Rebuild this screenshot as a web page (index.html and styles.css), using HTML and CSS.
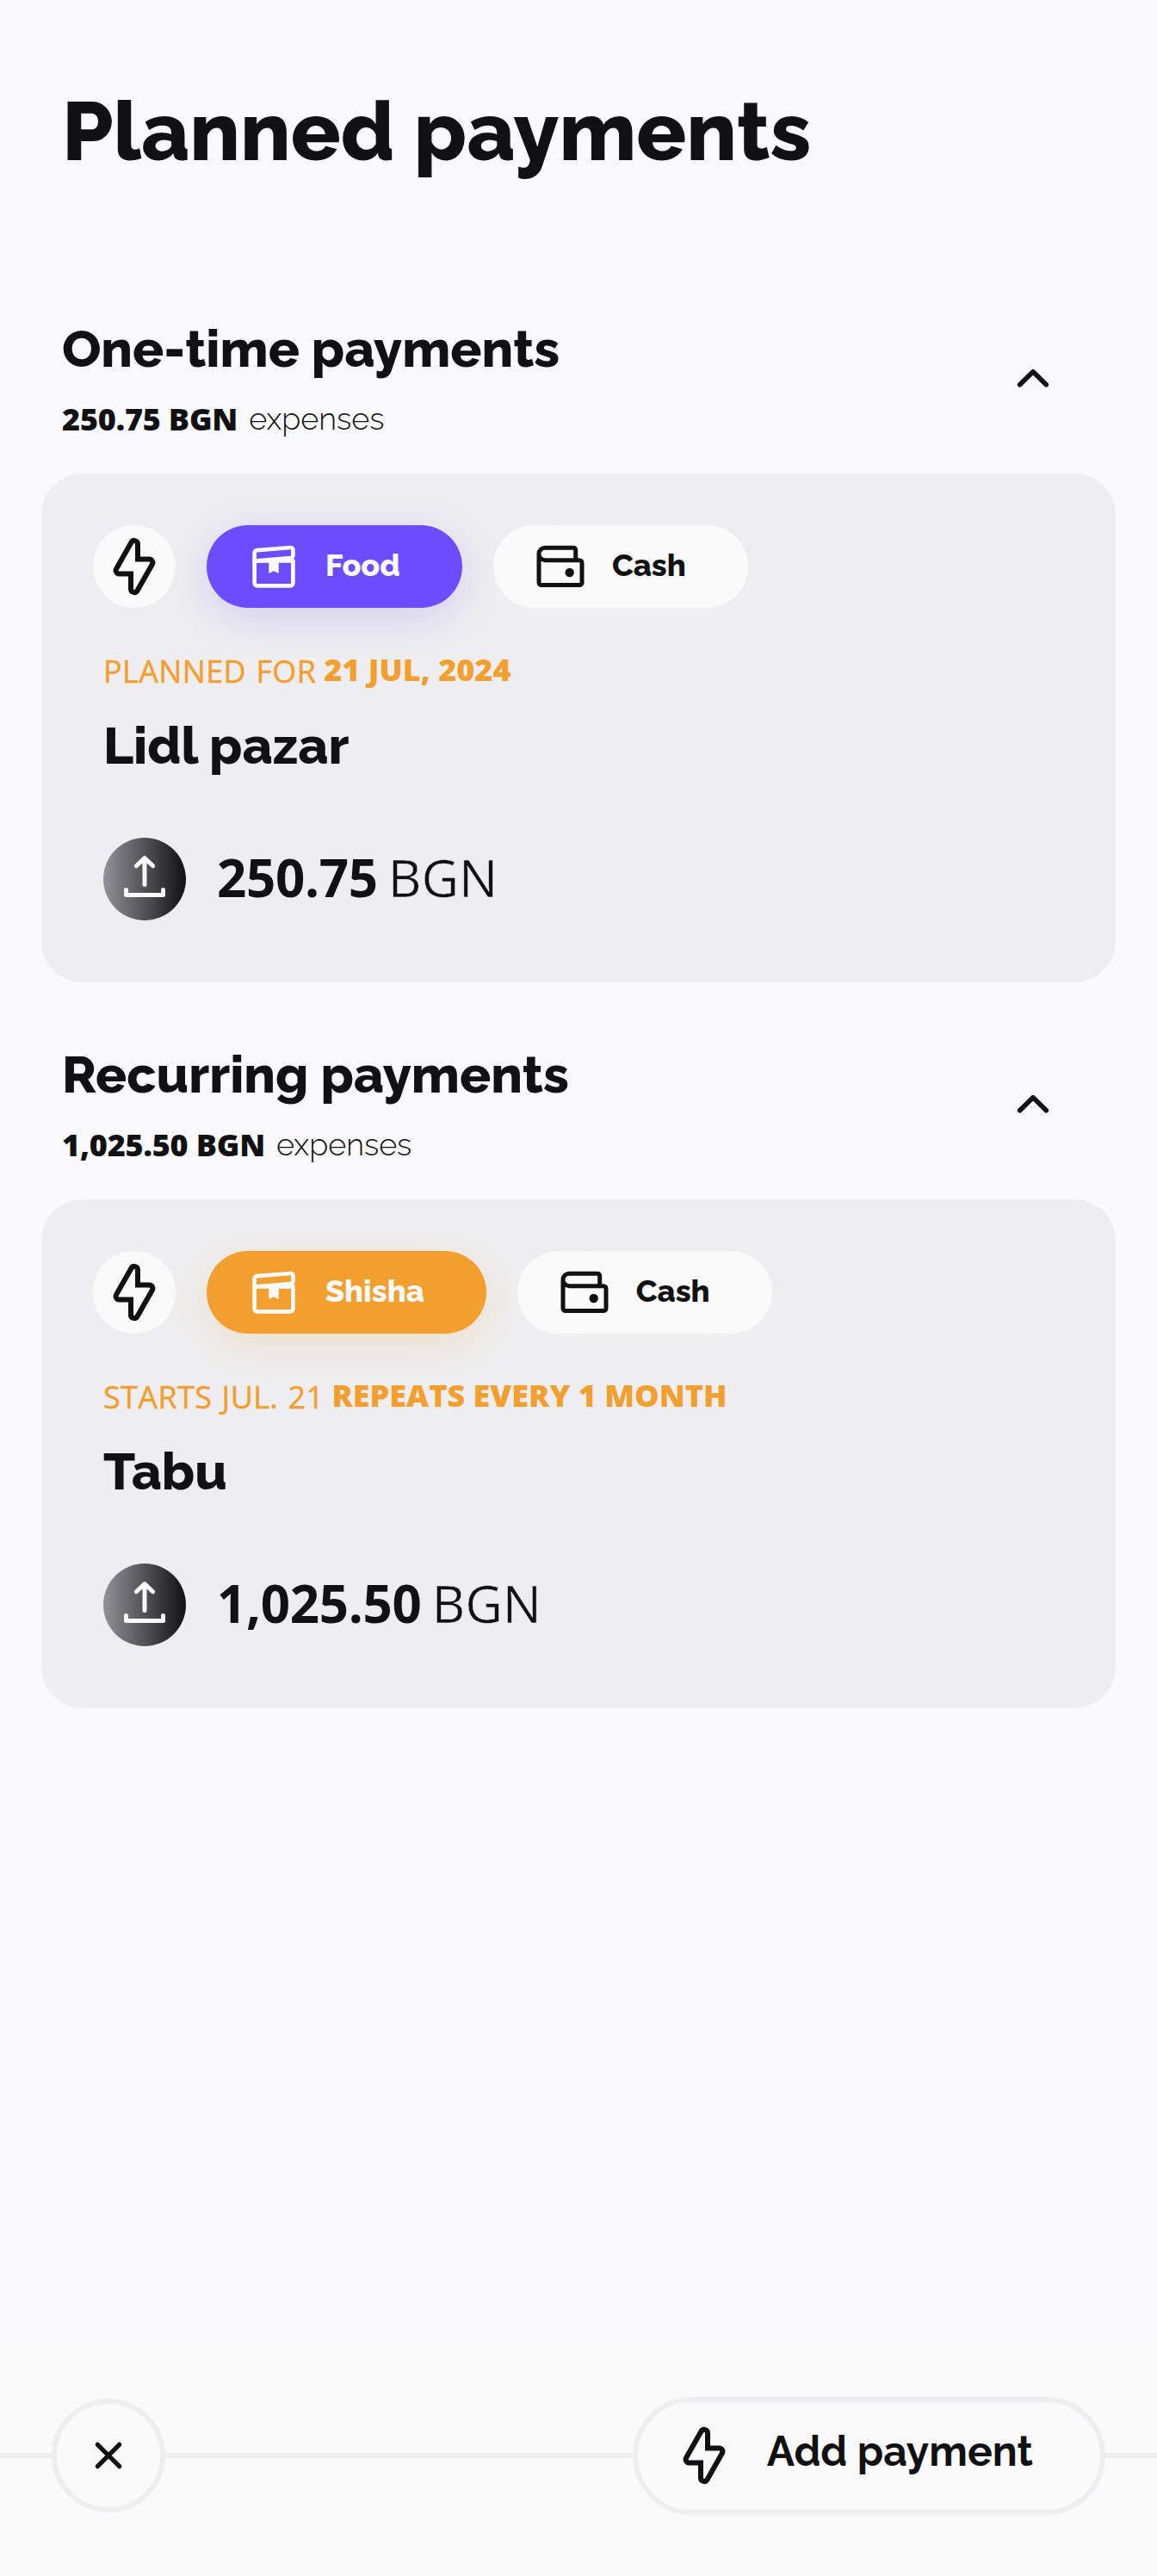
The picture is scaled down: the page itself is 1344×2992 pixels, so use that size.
FILE: index.html
```
<!DOCTYPE html>
<html lang="en">
<head>
<meta charset="utf-8">
<title>Planned payments</title>
<link rel="stylesheet" href="styles.css">
</head>
<body>
<svg class="sprite" aria-hidden="true">
  <symbol id="bolt" viewBox="0 0 96 96">
    <path d="M52 39.4V22a4 4 0 0 0-7.5-2L27.2 50.5a4 4 0 0 0 3.5 6.1H44V74a4 4 0 0 0 7.5 2L68.8 45.5a4 4 0 0 0-3.5-6.1Z" fill="none" stroke="currentColor" stroke-width="6"/>
  </symbol>
  <symbol id="box" viewBox="0 0 96 96">
    <g transform="translate(2 0)">
      <g fill="none" stroke="currentColor" stroke-width="4.7" stroke-linejoin="round">
        <path d="M3.6 41.3H48.4V67.3a3 3 0 0 1-3 3H6.6a3 3 0 0 1-3-3Z"/>
        <path d="M3.6 41.5V32.2a3 3 0 0 1 2.8-3L45.2 26a3 3 0 0 1 3.2 3V35a3 3 0 0 1-2.8 3Z"/>
      </g>
      <path d="M20.3 41H31.7V56L26 53.3L20.3 56Z" fill="currentColor"/>
    </g>
  </symbol>
  <symbol id="wallet" viewBox="0 0 96 96">
    <path d="M45.7 40.7V28.7a2.5 2.5 0 0 0-2.5-2.5H10.2a7.2 7.2 0 0 0 0 14.5H50a3 3 0 0 1 3 3V66.5a3 3 0 0 1-3 3H6a3 3 0 0 1-3-3V33.4" fill="none" stroke="currentColor" stroke-width="5"/>
    <circle cx="38.7" cy="55" r="5.2" fill="currentColor"/>
  </symbol>
  <symbol id="upload" viewBox="0 0 96 96">
    <path d="M48 54.5V24M38.4 32.7L48 23.6L57.6 32.7M26.5 60.5V66.5H69.5V60.5" fill="none" stroke="currentColor" stroke-width="5" stroke-linecap="round" stroke-linejoin="round"/>
  </symbol>
  <symbol id="chevron" viewBox="0 0 72 72">
    <path d="M20.7 43.7L36 28.7L51.3 43.7" fill="none" stroke="currentColor" stroke-width="5.6" stroke-linecap="round" stroke-linejoin="round"/>
  </symbol>
  <symbol id="cross" viewBox="0 0 72 72">
    <path d="M23.3 23.3L48.7 48.7M48.7 23.3L23.3 48.7" fill="none" stroke="currentColor" stroke-width="5.2" stroke-linecap="round"/>
  </symbol>
</svg>

<main class="content">
  <h1 class="title">Planned payments</h1>

  <section class="group">
    <header class="group-head">
      <div>
        <h2 class="group-title">One-time payments</h2>
        <p class="summary"><b class="summary-amount">250.75 BGN</b><span class="summary-label">expenses</span></p>
      </div>
      <svg class="chevron"><use href="#chevron"/></svg>
    </header>
    <article class="card">
      <div class="chips">
        <span class="type"><svg class="icon"><use href="#bolt"/></svg></span>
        <span class="chip chip-food"><svg class="icon"><use href="#box"/></svg>Food</span>
        <span class="chip chip-account"><svg class="icon"><use href="#wallet"/></svg>Cash</span>
      </div>
      <p class="due"><span class="due-when">PLANNED FOR</span><b class="due-rule">21 JUL, 2024</b></p>
      <h3 class="name">Lidl pazar</h3>
      <div class="amount">
        <span class="badge"><svg class="icon"><use href="#upload"/></svg></span>
        <b class="value">250.75</b><span class="currency">BGN</span>
      </div>
    </article>
  </section>

  <section class="group">
    <header class="group-head">
      <div>
        <h2 class="group-title">Recurring payments</h2>
        <p class="summary"><b class="summary-amount">1,025.50 BGN</b><span class="summary-label">expenses</span></p>
      </div>
      <svg class="chevron"><use href="#chevron"/></svg>
    </header>
    <article class="card">
      <div class="chips">
        <span class="type"><svg class="icon"><use href="#bolt"/></svg></span>
        <span class="chip chip-shisha"><svg class="icon"><use href="#box"/></svg>Shisha</span>
        <span class="chip chip-account"><svg class="icon"><use href="#wallet"/></svg>Cash</span>
      </div>
      <p class="due"><span class="due-when">STARTS JUL. 21</span><b class="due-rule">REPEATS EVERY 1 MONTH</b></p>
      <h3 class="name">Tabu</h3>
      <div class="amount">
        <span class="badge"><svg class="icon"><use href="#upload"/></svg></span>
        <b class="value">1,025.50</b><span class="currency">BGN</span>
      </div>
    </article>
  </section>
</main>

<footer class="bar">
  <button class="close" aria-label="Close"><svg class="cross"><use href="#cross"/></svg></button>
  <button class="add"><svg class="icon"><use href="#bolt"/></svg>Add payment</button>
</footer>
</body>
</html>
```
FILE: styles.css
```
* { box-sizing: border-box; }

body {
  margin: 0;
  min-height: 2992px;
  display: flex;
  flex-direction: column;
  background: #fafafc;
  color: #111114;
  font-family: Raleway, Lato, sans-serif;
}

h1, h2, h3, p { margin: 0; }

.sprite { position: absolute; width: 0; height: 0; }

.icon { display: block; width: 96px; height: 96px; flex: none; }

.content { padding: 95px 48px 0; }

.title {
  padding-left: 24px;
  font-size: 96px;
  line-height: 114px;
  font-weight: 800;
}

.group { margin-top: 71px; }
.title + .group { margin-top: 160px; }

.group-head {
  display: flex;
  justify-content: space-between;
  align-items: center;
  height: 181px;
  padding: 0 60px 39px 24px;
}

.group-title {
  font-size: 60px;
  line-height: 72px;
  font-weight: 800;
}

.summary {
  display: flex;
  align-items: flex-start;
  gap: 13px;
  height: 48px;
  margin-top: 22px;
  font-size: 36px;
  line-height: 48px;
}

.summary-amount {
  font-family: "Open Sans", sans-serif;
  font-weight: 800;
  letter-spacing: -.2px;
}

.summary-label { margin-top: -1px; font-weight: 300; }

.chevron { width: 72px; height: 72px; margin-bottom: 2px; }

.card {
  height: 591px;
  padding: 60px;
  border-radius: 48px;
  background: #eeeef0;
}

.chips { display: flex; gap: 36px; }

.type {
  width: 96px;
  height: 96px;
  border-radius: 50%;
  background: #fafafa;
}

.chip {
  display: flex;
  align-items: center;
  height: 96px;
  padding: 0 72px 4px 50px;
  border-radius: 48px;
  font-size: 36px;
  font-weight: 800;
}

.chip .icon { margin: 4px -8px 0 0; }

.chip-food { background: #6b4dff; color: #fafafa; box-shadow: 0 12px 48px rgba(107, 77, 255, .19); }
.chip-shisha { background: #f29f30; color: #fafafa; box-shadow: 0 12px 48px rgba(242, 159, 48, .19); }
.chip-account { background: #fafafa; box-shadow: 0 12px 48px rgba(250, 250, 250, .19); }

.due {
  display: flex;
  height: 48px;
  margin: 50px 0 0 12px;
  gap: 9px;
  color: #f29f30;
  font-family: "Open Sans", sans-serif;
  font-size: 36px;
  line-height: 48px;
}

.due-when {
  font-weight: 400;
  letter-spacing: .35px;
  word-spacing: 1.7px;
  -webkit-text-stroke: .5px currentColor;
}

.due-rule { font-weight: 800; margin-top: -2px; }

.name {
  margin: 26px 0 0 12px;
  font-size: 60px;
  line-height: 72px;
  font-weight: 800;
}

.amount {
  display: flex;
  align-items: center;
  margin: 71px 0 0 12px;
  font-family: "Open Sans", sans-serif;
  font-size: 60px;
  line-height: 82px;
}

.badge {
  width: 96px;
  height: 96px;
  margin-right: 36px;
  border-radius: 50%;
  background: linear-gradient(90deg, #939199, #111114);
  color: #fafafa;
}

.value { margin-bottom: 4px; font-weight: 700; letter-spacing: -.33px; }
.currency { margin: 0 0 4px 12px; font-weight: 400; -webkit-text-stroke: .5px #eeeef0; }

.bar {
  display: flex;
  justify-content: space-between;
  align-items: center;
  height: 280px;
  margin-top: auto;
  padding: 0 60px;
  background:
    linear-gradient(#eee, #eee) 0 137px / 100% 6px no-repeat,
    linear-gradient(#fafafc, #fafafa 60px);
}

.close, .add {
  display: flex;
  align-items: center;
  border: 6px solid #eeeef0;
  background: #fafafa;
  color: #111114;
  font: 700 48px/56px Raleway, Lato, sans-serif;
}

.close {
  justify-content: center;
  width: 132px;
  height: 132px;
  padding: 0;
  border-radius: 50%;
}

.cross { width: 72px; height: 72px; }

.add {
  height: 137px;
  padding: 0 78px 10px 29px;
  border-radius: 69px;
}

.add .icon { margin: 10px 25px 0 0; }
```
